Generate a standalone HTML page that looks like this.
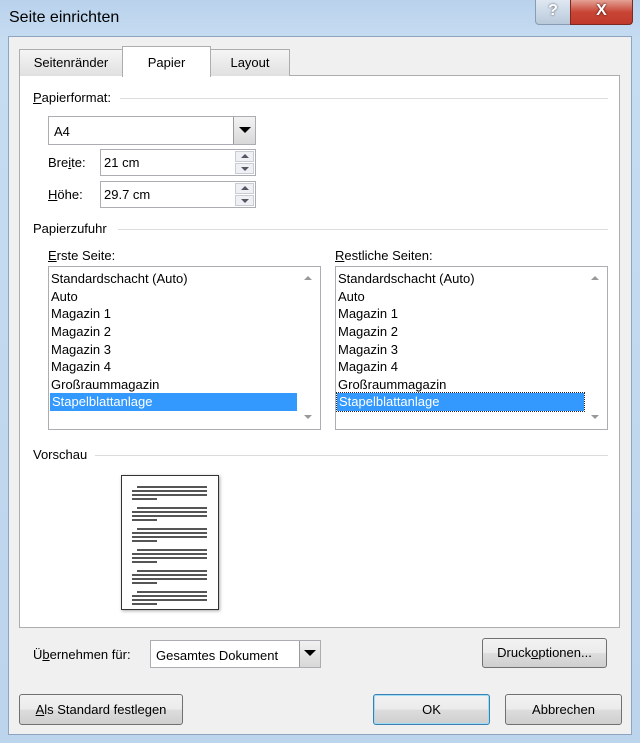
<!DOCTYPE html>
<html><head><meta charset="utf-8"><style>
*{box-sizing:border-box;margin:0;padding:0}
body{width:640px;height:743px;overflow:hidden;font-family:"Liberation Sans",sans-serif;font-size:13px;color:#000;position:relative;background:linear-gradient(180deg,#b9d2ec 0,#c6dcf1 40px,#bcd4ec 100%)}
.a{position:absolute}
u{text-decoration:underline}
.client{left:8px;top:36px;width:624px;height:699px;background:#f0f0f0;border:1px solid #8ea5c0}
.tab{top:49px;height:27px;border:1px solid #adadad;border-bottom:none;background:linear-gradient(#f5f5f5,#e0e0e0);text-align:center;line-height:26px;font-size:13px}
.panel{left:19px;top:75px;width:601px;height:553px;background:#fff;border:1px solid #adadad}
.hdr{font-size:13px;background:#fff;padding-right:4px}
.line{height:1px;background:#dcdcdc}
.box{background:#fff;border:1px solid #abadb3}
.btn{border:1px solid #707070;border-radius:3px;background:linear-gradient(#f2f2f2 0,#ebebeb 50%,#dddddd 51%,#cfcfcf 100%);text-align:center;font-size:13px}
.dd{background:linear-gradient(#f2f2f2,#d8d8d8);border-left:1px solid #9a9a9a}
.list{background:#fff;border:1px solid #abadb3;overflow:hidden}
.list div{position:absolute;left:2px;height:18px;line-height:18px;font-size:13px;white-space:nowrap}
.sel{background:#3399ff;color:#fff}
.pl{position:absolute;height:2px;background:#555}
</style></head><body>
<div class="a" style="left:9px;top:9px;font-size:16px;color:#000">Seite einrichten</div>
<div class="a" style="left:535px;top:0;width:36px;height:25px;border:1px solid #8a9cb3;border-top:none;border-radius:0 0 0 4px;background:linear-gradient(#dfe8f2,#b9c9db);color:#fff;text-align:center;font-weight:bold;font-size:16px;line-height:22px;text-shadow:0 0 2px #445">?</div>
<div class="a" style="left:570px;top:0;width:63px;height:25px;border:1px solid #7a2a20;border-top:none;border-radius:0 0 4px 0;background:linear-gradient(#e4a195,#c84636 50%,#c0392b 100%);color:#fff;text-align:center;font-weight:bold;font-size:16px;line-height:22px;text-shadow:0 0 2px #300">X</div>
<div class="a client"></div>
<div class="a panel"></div>
<div class="a tab" style="left:19px;width:104px">Seitenränder</div>
<div class="a tab" style="left:210px;width:80px">Layout</div>
<div class="a tab" style="left:122px;top:46px;width:89px;height:31px;background:#fff;line-height:32px">Papier</div>

<div class="a line" style="left:120px;top:98px;width:488px"></div>
<div class="a hdr" style="left:33px;top:90px"><u>P</u>apierformat:</div>
<div class="a box" style="left:48px;top:116px;width:208px;height:29px"><span class="a" style="left:5px;top:7px">A4</span><div class="a dd" style="right:0;top:0;width:22px;height:27px"><span class="a" style="left:5px;top:10px;border:6px solid transparent;border-top:6px solid #000;border-bottom:0"></span></div></div>
<div class="a" style="left:48px;top:155px">Bre<u>i</u>te:</div>
<div class="a box" style="left:100px;top:149px;width:156px;height:27px"><span class="a" style="left:3px;top:5px">21 cm</span><div class="a" style="right:1px;top:1px;width:19px;height:11px;background:#eef0f4;border:1px solid #c8ccd4"><span class="a" style="left:5px;top:2px;border:4px solid transparent;border-bottom:4px solid #556;border-top:0"></span></div><div class="a" style="right:1px;top:13px;width:19px;height:11px;background:#eef0f4;border:1px solid #c8ccd4"><span class="a" style="left:5px;top:3px;border:4px solid transparent;border-top:4px solid #556;border-bottom:0"></span></div></div>
<div class="a" style="left:48px;top:187px"><u>H</u>öhe:</div>
<div class="a box" style="left:100px;top:181px;width:156px;height:27px"><span class="a" style="left:3px;top:5px">29.7 cm</span><div class="a" style="right:1px;top:1px;width:19px;height:11px;background:#eef0f4;border:1px solid #c8ccd4"><span class="a" style="left:5px;top:2px;border:4px solid transparent;border-bottom:4px solid #556;border-top:0"></span></div><div class="a" style="right:1px;top:13px;width:19px;height:11px;background:#eef0f4;border:1px solid #c8ccd4"><span class="a" style="left:5px;top:3px;border:4px solid transparent;border-top:4px solid #556;border-bottom:0"></span></div></div>

<div class="a line" style="left:118px;top:229px;width:490px"></div>
<div class="a hdr" style="left:33px;top:221px">Papierzufuhr</div>
<div class="a" style="left:48px;top:248px"><u>E</u>rste Seite:</div>
<div class="a" style="left:335px;top:248px"><u>R</u>estliche Seiten:</div>

<div class="a list" style="left:48px;top:266px;width:273px;height:164px">
<div style="top:3px">Standardschacht (Auto)</div><div style="top:21px">Auto</div><div style="top:38px">Magazin 1</div><div style="top:56px">Magazin 2</div><div style="top:74px">Magazin 3</div><div style="top:91px">Magazin 4</div><div style="top:109px">Großraummagazin</div><div class="sel" style="top:126px;left:1px;width:247px;padding-left:2px">Stapelblattanlage</div>
<span class="a" style="left:255px;top:9px;border:4px solid transparent;border-bottom:4px solid #999;border-top:0"></span>
<span class="a" style="left:255px;top:148px;border:4px solid transparent;border-top:4px solid #999;border-bottom:0"></span>
</div>
<div class="a list" style="left:335px;top:266px;width:273px;height:164px">
<div style="top:3px">Standardschacht (Auto)</div><div style="top:21px">Auto</div><div style="top:38px">Magazin 1</div><div style="top:56px">Magazin 2</div><div style="top:74px">Magazin 3</div><div style="top:91px">Magazin 4</div><div style="top:109px">Großraummagazin</div><div class="sel" style="top:126px;left:1px;width:247px;padding-left:2px;outline:1px dotted #223">Stapelblattanlage</div>
<span class="a" style="left:255px;top:9px;border:4px solid transparent;border-bottom:4px solid #999;border-top:0"></span>
<span class="a" style="left:255px;top:148px;border:4px solid transparent;border-top:4px solid #999;border-bottom:0"></span>
</div>

<div class="a line" style="left:95px;top:455px;width:513px"></div>
<div class="a hdr" style="left:33px;top:447px">Vorschau</div>
<div class="a" style="left:121px;top:475px;width:98px;height:135px;border:1px solid #333;background:#fff;box-shadow:1px 1px 3px #aaa">
<div class="pl" style="left:15px;top:10px;width:70px"></div><div class="pl" style="left:10px;top:14px;width:75px"></div><div class="pl" style="left:10px;top:18px;width:75px"></div><div class="pl" style="left:10px;top:22px;width:25px"></div>
<div class="pl" style="left:15px;top:31px;width:70px"></div><div class="pl" style="left:10px;top:35px;width:75px"></div><div class="pl" style="left:10px;top:39px;width:75px"></div><div class="pl" style="left:10px;top:43px;width:25px"></div>
<div class="pl" style="left:15px;top:52px;width:70px"></div><div class="pl" style="left:10px;top:56px;width:75px"></div><div class="pl" style="left:10px;top:60px;width:75px"></div><div class="pl" style="left:10px;top:64px;width:25px"></div>
<div class="pl" style="left:15px;top:73px;width:70px"></div><div class="pl" style="left:10px;top:77px;width:75px"></div><div class="pl" style="left:10px;top:81px;width:75px"></div><div class="pl" style="left:10px;top:85px;width:25px"></div>
<div class="pl" style="left:15px;top:94px;width:70px"></div><div class="pl" style="left:10px;top:98px;width:75px"></div><div class="pl" style="left:10px;top:102px;width:75px"></div><div class="pl" style="left:10px;top:106px;width:25px"></div>
<div class="pl" style="left:15px;top:115px;width:70px"></div><div class="pl" style="left:10px;top:119px;width:75px"></div><div class="pl" style="left:10px;top:123px;width:75px"></div><div class="pl" style="left:10px;top:127px;width:25px"></div>
</div>

<div class="a" style="left:33px;top:647px">Ü<u>b</u>ernehmen für:</div>
<div class="a box" style="left:150px;top:640px;width:171px;height:28px"><span class="a" style="left:5px;top:7px">Gesamtes Dokument</span><div class="a dd" style="right:0;top:0;width:21px;height:26px"><span class="a" style="left:4px;top:9px;border:6px solid transparent;border-top:6px solid #000;border-bottom:0"></span></div></div>
<div class="a btn" style="left:482px;top:638px;width:125px;height:30px;line-height:28px">Druck<u>o</u>ptionen...</div>

<div class="a btn" style="left:19px;top:694px;width:164px;height:31px;line-height:30px"><u>A</u>ls Standard festlegen</div>
<div class="a btn" style="left:373px;top:694px;width:117px;height:31px;line-height:30px;border-color:#3c7fb1;box-shadow:inset 0 0 0 1px #9fdcf5">OK</div>
<div class="a btn" style="left:505px;top:694px;width:117px;height:31px;line-height:30px">Abbrechen</div>
</body></html>
